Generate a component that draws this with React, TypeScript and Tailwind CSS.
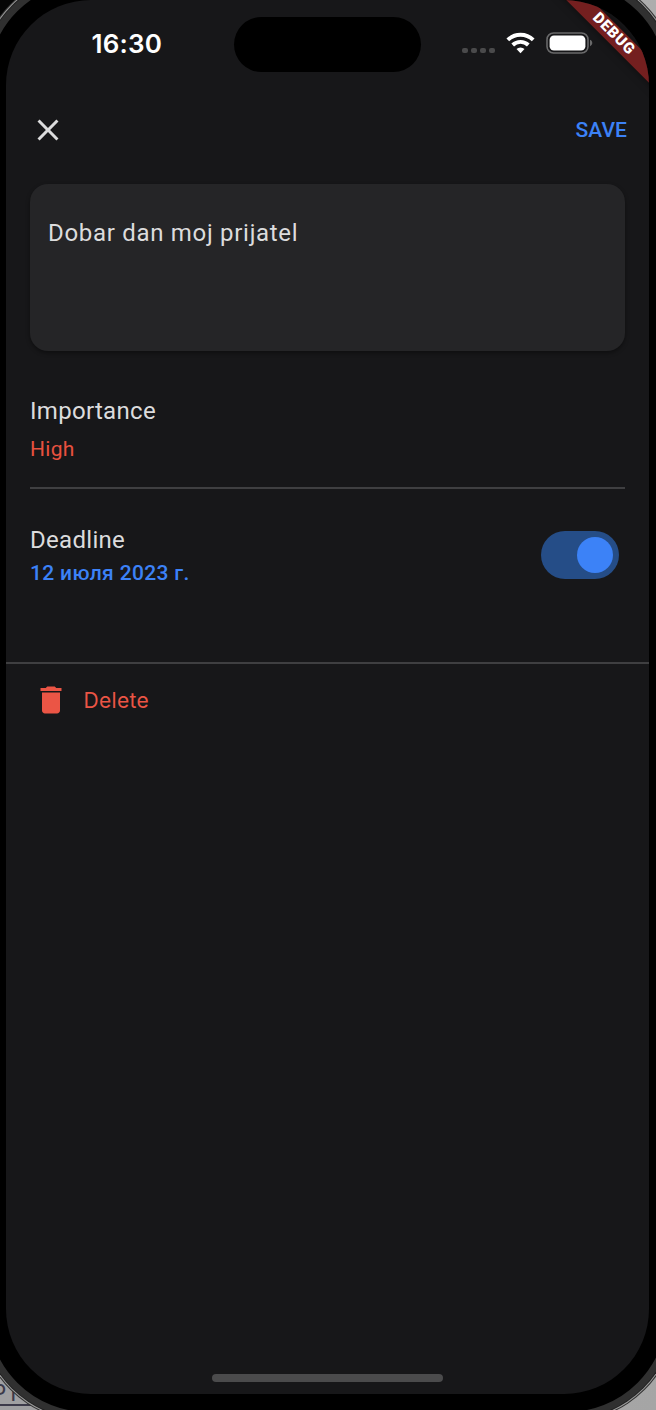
import { MdClose, MdDelete } from "react-icons/md";

function StatusBar() {
  return (
    <div className="flex h-[88px] items-start">
      <div className="w-[228px] pt-[28px] pl-[85.5px] font-['Inter'] text-[26px] leading-8 font-semibold tracking-[0.2px] text-white">16:30</div>
      <div className="mt-[17px] h-[55px] w-[187px] rounded-full bg-black" />
      <div className="mt-[31px] ml-[41px] flex h-6 items-center">
        <div className="mt-[15px] mr-[11px] flex gap-[3.5px]">
          {[0, 1, 2, 3].map((i) => (
            <span key={i} className="size-[5.5px] rounded-[2px] bg-[#4a4a4b]" />
          ))}
        </div>
        <svg width="29" height="22" viewBox="0 0 29 22" fill="none" stroke="#fff" strokeWidth="3.9">
          <path d="M1.8 7.9a18.3 18.3 0 0 1 25.4 0" />
          <path d="M6.7 13a11.3 11.3 0 0 1 15.6 0" />
          <path d="M14.5 21.2l-4-4.1a5.8 5.8 0 0 1 8 0z" fill="#fff" stroke="none" />
        </svg>
        <svg className="ml-[11px]" width="48" height="22" viewBox="0 0 48 22">
          <rect x="1" y="1" width="41" height="20" rx="6.5" fill="none" stroke="#69696a" strokeWidth="1.6" />
          <rect x="3.6" y="3.4" width="35.8" height="15.2" rx="4.4" fill="#fff" />
          <path d="M44 7.8c3 1.2 3 5.2 0 6.4z" fill="#69696a" />
        </svg>
      </div>
    </div>
  );
}

function DebugBanner() {
  return (
    <div className="absolute top-0 right-0 h-[120px] w-[120px] overflow-hidden">
      <div className="absolute top-[26.1px] left-[14.9px] flex h-[18px] w-[140px] rotate-45 items-center justify-center bg-[#741f1f] pr-[2px] font-['Roboto'] text-[15.3px] leading-none font-black tracking-[0.7px] text-white shadow-[0_0_9px_rgba(0,0,0,0.5)]">
        DEBUG
      </div>
    </div>
  );
}

export default function App() {
  return (
    <div className="relative flex h-[1410px] w-[656px] items-start overflow-hidden bg-[linear-gradient(to_bottom_right,#050505_0%,#050505_20%,#b0b0b0_32%,#a5a5a5_100%)] font-['Roboto'] text-[#dcdcdd]">
      <div className="absolute bottom-0 left-0 h-9 w-12 bg-[#a0a0a2] font-['Liberation_Sans'] text-[23px] text-[#3c3a4a]">
        <div className="-ml-[9px] h-[32px] border-b-2 border-[#3c3a4a] pt-[7px] leading-6">PT</div>
      </div>
      <div className="relative -mt-[25px] -ml-[19px] h-[1444px] w-[693px] shrink-0 rounded-[107px] border-[7px] border-[#303030] bg-black p-[18px] shadow-[0_0_0_1px_#202020,0_0_0_2px_#9a9a9a,0_0_0_3px_#303030]">
        <main className="relative flex h-[1394px] w-[643px] flex-col overflow-hidden rounded-[85px] bg-[#171719]">
          <StatusBar />
          <header className="flex h-[84px] items-center justify-between pr-[22px] pl-6">
            <MdClose size={36} />
            <span className="pt-[2px] text-[21px] font-medium tracking-[0.1px] text-[#3c82f7]">SAVE</span>
          </header>
          <div className="mx-6 mt-3 h-[167px] rounded-[18px] bg-[#252527] pt-[34px] pl-[18px] text-[24px] leading-[30px] tracking-[0.7px] shadow-[0_2px_4px_rgba(0,0,0,0.4)]">
            Dobar dan moj prijatel
          </div>
          <section className="mx-6 mt-[45px] h-[93px] border-b-2 border-[#3f3f41]">
            <div className="text-[24px] leading-[30px] tracking-[0.3px]">Importance</div>
            <div className="mt-[9px] text-[21px] leading-7 tracking-[0.3px] text-[#e8513f]">High</div>
          </section>
          <section className="flex h-[175px] justify-between border-b-2 border-[#3f3f41] pr-[30px] pl-6">
            <div className="pt-9">
              <div className="text-[24px] leading-[30px] tracking-[0.3px]">Deadline</div>
              <div className="mt-1 text-[21px] leading-7 font-medium tracking-[0.34px] text-[#3c82f7]">12 июля 2023 г.</div>
            </div>
            <div className="mt-[42px] flex h-12 w-[78px] items-center justify-end rounded-full bg-[#254d87] pr-[6px]">
              <div className="size-9 rounded-full bg-[#3c82f7]" />
            </div>
          </section>
          <div className="flex h-[72px] items-center pl-[27px] text-[#eb5545]">
            <MdDelete size={36} />
            <span className="ml-[14.5px] pt-px font-['Inter'] text-[21px] tracking-[0.3px]">Delete</span>
          </div>
          <div className="mt-auto mb-3 ml-[206px] h-2 w-[231px] rounded-full bg-[#4b4b4c]" />
          <DebugBanner />
        </main>
      </div>
    </div>
  );
}
